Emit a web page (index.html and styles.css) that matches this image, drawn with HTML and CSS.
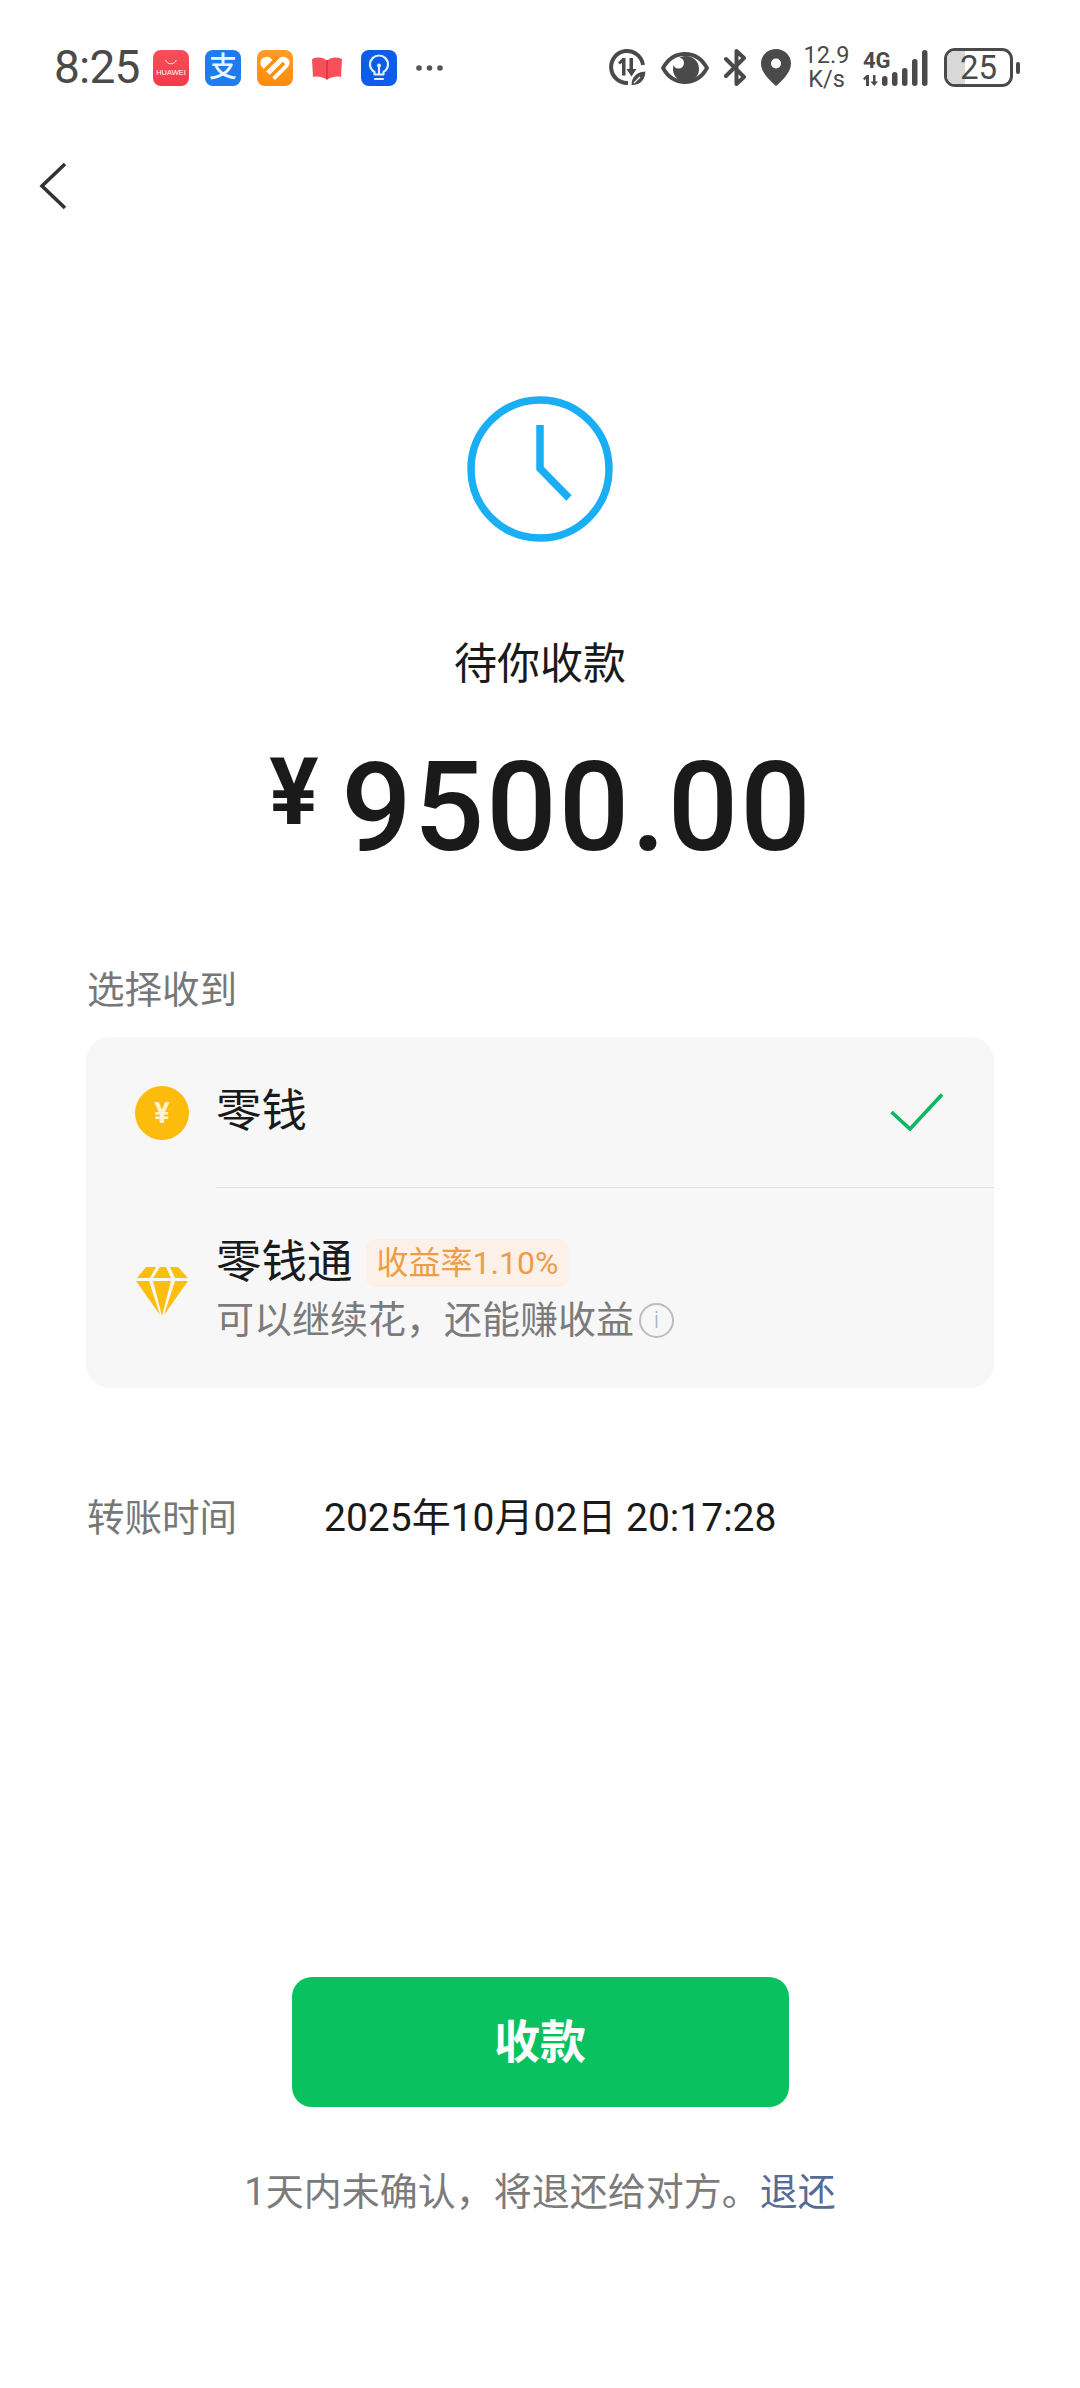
FILE: index.html
```html
<!DOCTYPE html>
<html lang="zh-CN">
<head>
<meta charset="utf-8">
<title>待你收款</title>
<link rel="stylesheet" href="styles.css">
</head>
<body>
<div class="page">
  <header class="status">
    <div class="status-left">
      <span class="time">8:25</span>
      <span class="app app-huawei">
        <svg class="bag" viewBox="0 0 16 8"><path d="M2 1c1 6 11 6 12 0" fill="none" stroke="#fff" stroke-width="1"/></svg>
        <span class="huawei-text">HUAWEI</span>
      </span>
      <span class="app app-alipay">支</span>
      <span class="app app-heart">
        <svg viewBox="0 0 36 36"><path d="M18 30 6 18c-4-4-3-9 1-10.500 3-1.500 6-.5 8 2l3 3 3-3c2-2.500 5-3.500 8-2 4 1.500 5 6.500 1 10.500z" fill="#fff"/><path d="M7 21 21 7M13 27 27 13" stroke="#ff8f17" stroke-width="3.500"/></svg>
      </span>
      <svg class="book" viewBox="0 0 30 24"><path d="M0 3c5-2 10-2 14 1v19c-4-2-8-3-13-2z" fill="#f7505a"/><path d="M30 3c-5-2-10-2-14 1v19c4-2 8-3 13-2z" fill="#f7505a"/><path d="M14 4h2v19l-1 1-1-1z" fill="#e03a48"/></svg>
      <span class="app app-bulb">
        <svg viewBox="0 0 36 36"><path d="M13.500 24.500v-2.500c-3-2-4.500-4.500-4.500-7.500a9 9 0 0 1 18 0c0 3-1.500 5.500-4.500 7.500v2.500zM14 29h8" fill="none" stroke="#dff0ff" stroke-width="2.200" stroke-linecap="round" stroke-linejoin="round"/><path d="M18 24v-7" stroke="#dff0ff" stroke-width="2.200"/><circle cx="18" cy="15.500" r="2" fill="#dff0ff"/></svg>
      </span>
      <svg class="dots" viewBox="0 0 28 6"><circle cx="3" cy="3" r="2.800"/><circle cx="13.500" cy="3" r="2.800"/><circle cx="24" cy="3" r="2.800"/></svg>
    </div>
    <div class="status-right">
      <svg class="i-data" viewBox="0 0 37 37"><path d="M34 16A16 16 0 1 0 19 34" fill="none" stroke="#4a4a4a" stroke-width="4"/><path d="M9 13.500l4.500-4.500h3v17.500H13V13.800l-2 1.800zM20.500 9H24v11h3.500l-5 7.500-5-7.500h3z" fill="#4a4a4a"/><path d="M22 36.500c-.5-8 5-14.500 15-14.500 0 8.500-5 15-15 14.500z" fill="#4a4a4a" stroke="#fff" stroke-width="1.200"/><path d="M25 34l6-6" stroke="#fff" stroke-width="1.200"/></svg>
      <svg class="i-eye" viewBox="0 0 48 32"><path d="M2 16C7 7 15 2 24 2s17 5 22 14c-5 9-13 14-22 14S7 25 2 16z" fill="none" stroke="#4a4a4a" stroke-width="3.800" stroke-linejoin="round"/><circle cx="25" cy="17" r="13" fill="#4a4a4a"/><circle cx="17.500" cy="11" r="5.500" fill="#fff"/></svg>
      <svg class="i-bt" viewBox="0 0 22 37"><path d="M2 10l18 18-7.500 7V2L20 9 2 27" fill="none" stroke="#4a4a4a" stroke-width="4" stroke-linejoin="round" stroke-linecap="round"/></svg>
      <svg class="i-pin" viewBox="0 0 30 37"><path d="M15 0c8.500 0 15 6.500 15 14.500C30 24 20 32.500 15 37 10 32.500 0 24 0 14.500 0 6.500 6.500 0 15 0z" fill="#4a4a4a"/><circle cx="15" cy="14.500" r="5" fill="#fff"/></svg>
      <span class="speed"><span>12.9</span><span>K/s</span></span>
      <span class="net">
        <span class="net-col">
          <span class="net-4g">4G</span>
          <svg class="net-arrows" viewBox="0 0 15 11"><path d="M0 3.500 3.500 0H6v11H3V3.800l-1.500 1.400zM10 0h2.500v6.500H15L11.300 11 7.500 6.500H10z" fill="#4a4a4a"/></svg>
        </span>
        <svg class="net-bars" viewBox="0 0 46 36"><g fill="#4a4a4a"><rect x="0" y="26" width="5.500" height="10" rx="2.700"/><rect x="10" y="22" width="5.500" height="14" rx="2.700"/><rect x="20" y="18" width="5.500" height="18" rx="2.700"/><rect x="30" y="9" width="5.500" height="27" rx="2.700"/><rect x="40" y="0" width="5.500" height="36" rx="2.700"/></g></svg>
      </span>
      <span class="battery"><span class="battery-fill"></span><span class="battery-num">25</span></span>
      <span class="battery-nub"></span>
    </div>
  </header>

  <nav class="nav">
    <svg class="back" viewBox="0 0 28 48"><path d="M26 2 3 24l23 22" fill="none" stroke="#333" stroke-width="3.600"/></svg>
  </nav>

  <main class="main">
    <svg class="clock" viewBox="0 0 146 146"><circle cx="73" cy="73" r="69" fill="none" stroke="#1aaef5" stroke-width="7.500"/><path d="M73 29v43.500l29 29.500" fill="none" stroke="#1aaef5" stroke-width="7.500"/></svg>
    <h1 class="title">待你收款</h1>
    <div class="amount"><span class="yen">¥</span><span class="sum">9500.00</span></div>

    <section class="receive">
      <div class="receive-label">选择收到</div>
      <div class="card">
        <div class="option option-top">
          <span class="coin">¥</span>
          <div class="option-body">
            <span class="option-name">零钱</span>
            <svg class="check" viewBox="0 0 54 38"><path d="M1.500 19 20 36 52 1.500" fill="none" stroke="#09b85f" stroke-width="3.600"/></svg>
          </div>
        </div>
        <div class="option option-bottom">
          <svg class="gem" viewBox="0 0 54 50"><path d="M11 0h10l-6 11H2zM25 0h6l5 11H18zM35 0h8l10 11H40zM1 14h13l11 34zM18 14h18l-9 35zM40 14h13L29 48z" fill="#fcbf0e"/></svg>
          <div class="option-text">
            <div class="option-line">
              <span class="option-name">零钱通</span>
              <span class="rate">收益率1.10%</span>
            </div>
            <div class="option-sub">可以继续花，还能赚收益<span class="info">i</span></div>
          </div>
        </div>
      </div>
    </section>

    <div class="transfer">
      <span class="transfer-label">转账时间</span>
      <span class="transfer-value">2025年10月02日 20:17:28</span>
    </div>
  </main>

  <footer class="foot">
    <button class="accept">收款</button>
    <p class="note">1天内未确认，将退还给对方。<a class="refund">退还</a></p>
  </footer>
</div>
</body>
</html>
```

FILE: styles.css
```css
* { box-sizing: border-box; margin: 0; padding: 0; }
html, body { background: #fff; }
body { font-family: Roboto, "Noto Sans CJK SC", sans-serif; color: #1a1a1a; }
.page { width: 1080px; height: 2388px; display: flex; flex-direction: column; overflow: hidden; }

.status { height: 47px; margin-top: 44px; padding: 0 60px 0 54px; display: flex; justify-content: space-between; align-items: center; flex: none; }
.status-left, .status-right { display: flex; align-items: center; }
.time { width: 99px; font-size: 46px; line-height: 47px; color: #4a4a4a; letter-spacing: -.8px; }
.app { width: 36px; height: 36px; border-radius: 8px; margin-right: 16px; flex: none; display: flex; flex-direction: column; align-items: center; justify-content: center; }
.app svg { display: block; }
.app-huawei { background: linear-gradient(#f75058, #f2394a); }
.bag { width: 14px; height: 7px; margin-bottom: 3px; }
.huawei-text { font-size: 7.500px; line-height: 8px; color: #fff; font-family: "Liberation Sans", sans-serif; }
.app-alipay { background: #1f7bf0; color: #e8f6ff; font-size: 28px; line-height: 36px; font-weight: 500; }
.app-heart { background: linear-gradient(#fa9e2a, #ff8a0c); }
.app-heart svg, .app-bulb svg { width: 36px; height: 36px; }
.book { width: 30px; height: 24px; margin: 0 19px 0 3px; flex: none; }
.app-bulb { background: #0f5bea; margin-right: 19px; }
.dots { width: 28px; height: 6px; fill: #555; }

.i-data { width: 37px; height: 37px; margin-right: 15px; }
.i-eye { width: 48px; height: 32px; margin-right: 15px; }
.i-bt { width: 22px; height: 37px; margin-right: 15px; }
.i-pin { width: 30px; height: 37px; margin-right: 13px; }
.speed { width: 45px; display: flex; flex-direction: column; align-items: center; font-size: 23.500px; line-height: 23.500px; color: #4a4a4a; margin-right: 14px; white-space: nowrap; }
.net { display: flex; align-items: flex-end; margin-right: 16px; }
.net-col { width: 19px; display: flex; flex-direction: column; gap: 6px; }
.net-4g { width: 26px; font-size: 22px; line-height: 17px; font-weight: 700; color: #4a4a4a; white-space: nowrap; }
.net-arrows { width: 15px; height: 11px; }
.net-bars { width: 46px; height: 36px; }
.battery { position: relative; width: 69px; height: 39px; border: 3px solid #4a4a4a; border-radius: 11px; display: flex; align-items: center; justify-content: center; overflow: hidden; }
.battery-fill { position: absolute; left: 0; top: 0; bottom: 0; width: 18px; background: #d8d8d8; }
.battery-num { position: relative; font-size: 33px; line-height: 33px; color: #4a4a4a; }
.battery-nub { width: 4px; height: 12px; border-radius: 2px; background: #4a4a4a; margin-left: 3px; }

.nav { padding: 71px 0 0 39px; flex: none; }
.back { display: block; width: 28px; height: 48px; }

.main { flex: 1; display: flex; flex-direction: column; align-items: center; }
.clock { display: block; width: 146px; height: 146px; margin-top: 186px; }
.title { margin-top: 95px; font-size: 43px; line-height: 54px; font-weight: 400; color: #1a1a1a; }
.amount { margin-top: 50px; height: 130px; padding-left: 2px; display: flex; align-items: flex-start; }
.yen { font-size: 92px; line-height: 92px; font-weight: 700; margin: 6px 26px 0 0; width: 46px; }
.sum { margin-top: 2px; font-size: 124px; line-height: 130px; font-weight: 500; letter-spacing: 2px; }

.receive { align-self: stretch; margin: 94px 86px 0; }
.receive-label { font-size: 37.500px; line-height: 50px; color: #777; padding-left: 1px; }
.card { margin-top: 22px; background: #f7f7f7; border-radius: 24px; height: 351px; }
.option { display: flex; align-items: center; padding-left: 49px; }
.option-top { height: 151px; }
.option-bottom { height: 200px; }
.coin { width: 54px; height: 54px; border-radius: 50%; background: #fdbb0c; color: #fff3cf; font-size: 29px; font-weight: 700; display: flex; align-items: center; justify-content: center; flex: none; }
.option-body { flex: 1; align-self: stretch; margin-left: 27px; border-bottom: 1px solid #e2e2e2; display: flex; align-items: center; justify-content: space-between; padding: 0 50px 0 0; }
.option-name { font-size: 45.500px; line-height: 56px; color: #1a1a1a; }
.check { width: 54px; height: 38px; }
.gem { width: 54px; height: 50px; margin-top: 8px; flex: none; }
.option-text { margin-left: 27px; margin-top: 2px; }
.option-line { display: flex; align-items: center; }
.rate { margin-left: 13px; height: 48px; padding: 0 11px; border-radius: 9px; background: #fbf1e8; color: #ee9c45; font-size: 32px; line-height: 48px; }
.option-sub { margin-top: 6px; font-size: 38px; line-height: 46px; color: #7b7b7b; display: flex; align-items: center; }
.info { width: 35px; height: 35px; margin-left: 5px; border: 2px solid #bcbcbc; border-radius: 50%; color: #b0b0b0; font-size: 24px; line-height: 31px; text-align: center; font-weight: 300; }

.transfer { align-self: stretch; margin: 105px 86px 0; display: flex; align-items: center; font-size: 37.500px; line-height: 50px; }
.transfer-label { color: #777; width: 238px; padding-left: 1px; }
.transfer-value { color: #1a1a1a; font-size: 39px; }

.foot { flex: none; padding-bottom: 171px; display: flex; flex-direction: column; align-items: center; }
.accept { width: 497px; height: 130px; border: 0; border-radius: 20px; background: #09c25f; color: #fff; font: 700 46px/56px Roboto, "Noto Sans CJK SC", sans-serif; }
.note { margin-top: 60px; font-size: 38px; line-height: 50px; color: #7b7b7b; }
.refund { color: #576b95; }
```
